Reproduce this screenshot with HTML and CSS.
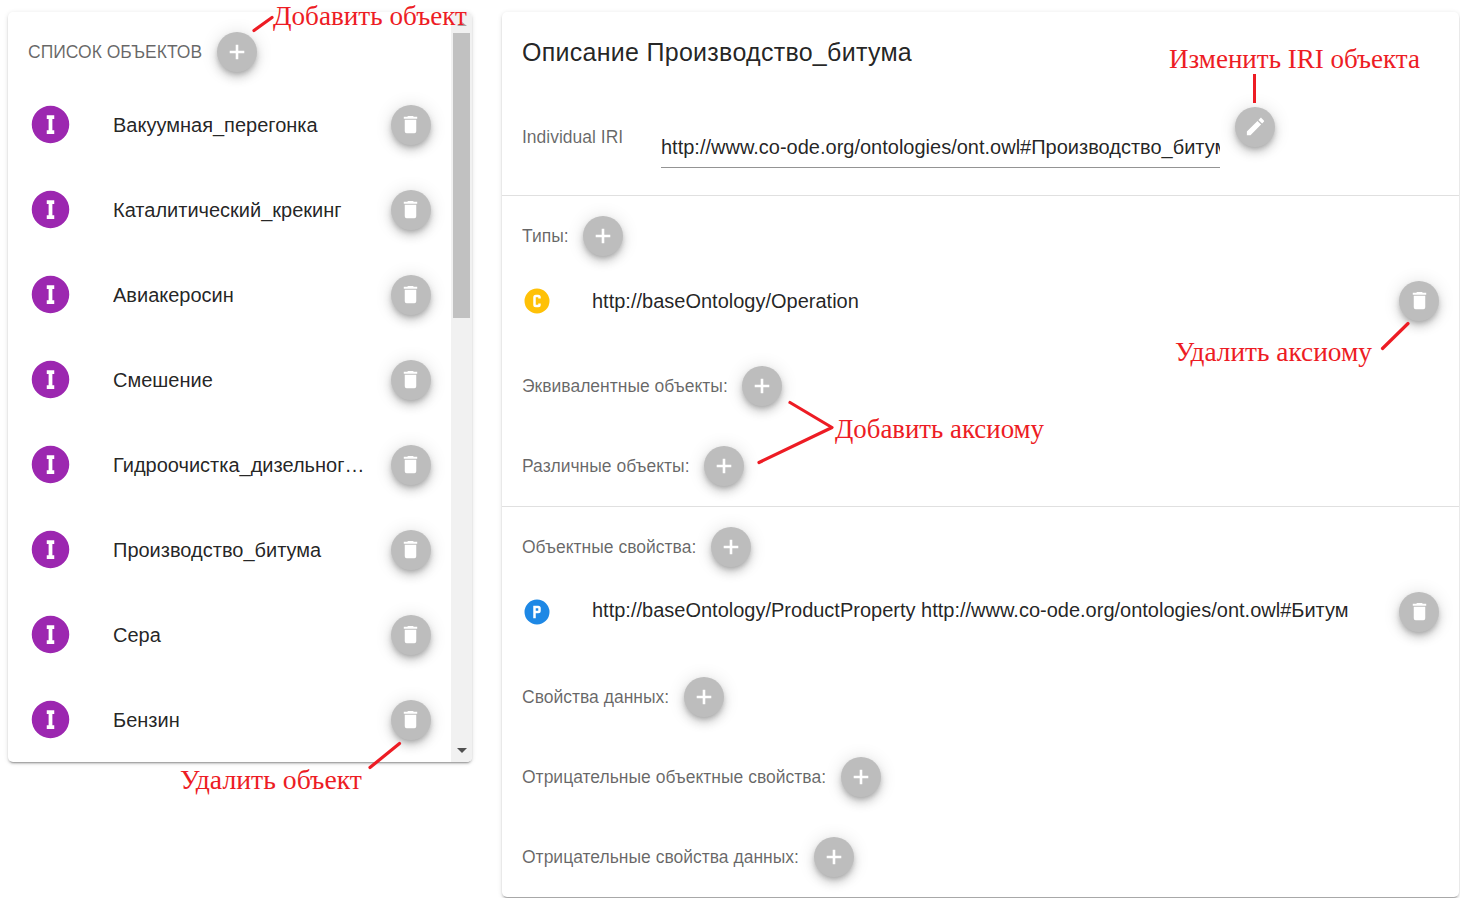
FILE: index.html
```html
<!DOCTYPE html>
<html lang="ru">
<head>
<meta charset="utf-8">
<title>Объекты</title>
<link rel="stylesheet" href="styles.css">
</head>
<body>
<svg class="defs" aria-hidden="true">
  <symbol id="plus" viewBox="0 0 24 24"><path d="M19.300,13.300H13.300V19.300H10.700V13.300H4.700V10.700H10.700V4.700H13.300V10.700H19.300V13.300Z"/></symbol>
  <symbol id="trash" viewBox="0 0 24 24"><path d="M19,4H15.5L14.5,3H9.5L8.5,4H5V6H19M6,19A2,2 0 0,0 8,21H16A2,2 0 0,0 18,19V7H6V19Z"/></symbol>
  <symbol id="pencil" viewBox="0 0 24 24"><path d="M20.71,7.04C21.1,6.65 21.1,6 20.71,5.63L18.37,3.29C18,2.9 17.35,2.9 16.96,3.29L15.12,5.12L18.87,8.87M3,17.25V21H6.75L17.81,9.93L14.06,6.18L3,17.25Z"/></symbol>
  <symbol id="ind" viewBox="0 0 24 24"><path d="M12,2A10,10 0 0,1 22,12A10,10 0 0,1 12,22A10,10 0 0,1 2,12A10,10 0 0,1 12,2M10,7V9H11V15H10V17H14V15H13V9H14V7H10Z"/></symbol>
  <symbol id="cls" viewBox="0 0 24 24"><path d="M12,2A10,10 0 0,1 22,12A10,10 0 0,1 12,22A10,10 0 0,1 2,12A10,10 0 0,1 12,2M11,7A2,2 0 0,0 9,9V15A2,2 0 0,0 11,17H13A2,2 0 0,0 15,15V14H13V15H11V9H13V10H15V9A2,2 0 0,0 13,7H11Z"/></symbol>
  <symbol id="prop" viewBox="0 0 24 24"><path fill-rule="evenodd" d="M12,2A10,10 0 0,1 22,12A10,10 0 0,1 12,22A10,10 0 0,1 2,12A10,10 0 0,1 12,2M9,7V17H11V13H13A2,2 0 0,0 15,11V9A2,2 0 0,0 13,7H9M11,9H13V11H11V9Z"/></symbol>
</svg>

<div class="page">
  <aside class="card list-card">
    <div class="list">
      <div class="list-head"><span class="label caps">СПИСОК ОБЪЕКТОВ</span><button class="fab add"><svg><use href="#plus"/></svg></button></div>
      <div class="item"><svg class="avatar"><use href="#ind"/></svg><span class="name">Вакуумная_перегонка</span><button class="fab"><svg><use href="#trash"/></svg></button></div>
      <div class="item"><svg class="avatar"><use href="#ind"/></svg><span class="name">Каталитический_крекинг</span><button class="fab"><svg><use href="#trash"/></svg></button></div>
      <div class="item"><svg class="avatar"><use href="#ind"/></svg><span class="name">Авиакеросин</span><button class="fab"><svg><use href="#trash"/></svg></button></div>
      <div class="item"><svg class="avatar"><use href="#ind"/></svg><span class="name">Смешение</span><button class="fab"><svg><use href="#trash"/></svg></button></div>
      <div class="item"><svg class="avatar"><use href="#ind"/></svg><span class="name">Гидроочистка_дизельног…</span><button class="fab"><svg><use href="#trash"/></svg></button></div>
      <div class="item"><svg class="avatar"><use href="#ind"/></svg><span class="name">Производство_битума</span><button class="fab"><svg><use href="#trash"/></svg></button></div>
      <div class="item"><svg class="avatar"><use href="#ind"/></svg><span class="name">Сера</span><button class="fab"><svg><use href="#trash"/></svg></button></div>
      <div class="item"><svg class="avatar"><use href="#ind"/></svg><span class="name">Бензин</span><button class="fab"><svg><use href="#trash"/></svg></button></div>
    </div>
    <div class="scrollbar">
      <span class="arrow up"></span>
      <span class="thumb"></span>
      <span class="arrow down"></span>
    </div>
  </aside>

  <main class="card detail">
    <section class="section">
      <h1 class="title"><span>Описание Производство_битума</span></h1>
      <div class="iri-row">
        <span class="label iri-label">Individual IRI</span>
        <div class="field"><span>http://www.co-ode.org/ontologies/ont.owl#Производство_битума</span></div>
        <button class="fab"><svg><use href="#pencil"/></svg></button>
      </div>
    </section>
    <section class="section">
      <div class="group"><span class="label">Типы:</span><button class="fab add"><svg><use href="#plus"/></svg></button></div>
      <div class="axiom"><svg class="mark amber"><use href="#cls"/></svg><span class="value">http://baseOntology/Operation</span><button class="fab"><svg><use href="#trash"/></svg></button></div>
      <div class="group"><span class="label">Эквивалентные объекты:</span><button class="fab add"><svg><use href="#plus"/></svg></button></div>
      <div class="group"><span class="label">Различные объекты:</span><button class="fab add"><svg><use href="#plus"/></svg></button></div>
    </section>
    <section class="section">
      <div class="group"><span class="label">Объектные свойства:</span><button class="fab add"><svg><use href="#plus"/></svg></button></div>
      <div class="axiom"><svg class="mark blue"><use href="#prop"/></svg><span class="value raised">http://baseOntology/ProductProperty http://www.co-ode.org/ontologies/ont.owl#Битум</span><button class="fab"><svg><use href="#trash"/></svg></button></div>
      <div class="group"><span class="label">Свойства данных:</span><button class="fab add"><svg><use href="#plus"/></svg></button></div>
      <div class="group"><span class="label">Отрицательные объектные свойства:</span><button class="fab add"><svg><use href="#plus"/></svg></button></div>
      <div class="group"><span class="label">Отрицательные свойства данных:</span><button class="fab add"><svg><use href="#plus"/></svg></button></div>
    </section>
  </main>
</div>

<svg class="notes" viewBox="0 0 1460 898">
  <text x="273" y="25.400" textLength="194" lengthAdjust="spacingAndGlyphs">Добавить объект</text>
  <text x="180" y="789.400" textLength="182" lengthAdjust="spacingAndGlyphs">Удалить объект</text>
  <text x="1169" y="68.400" textLength="251" lengthAdjust="spacingAndGlyphs">Изменить IRI объекта</text>
  <text x="1175" y="361.400" textLength="197" lengthAdjust="spacingAndGlyphs">Удалить аксиому</text>
  <text x="835" y="438.400" textLength="209" lengthAdjust="spacingAndGlyphs">Добавить аксиому</text>
  <path d="M254,30.5L272,17.5M370,767.500L399.500,743.500M1382.500,348.500L1408,323.500M790,402.500L832,427.500L759,462.500"/>
  <path class="butt" d="M1254.500,74V103"/>
</svg>
</body>
</html>
```
FILE: styles.css
```css
* { box-sizing: border-box; }
body {
  margin: 0;
  width: 1460px;
  height: 898px;
  overflow: hidden;
  background: #fff;
  color: rgba(0, 0, 0, .87);
  font-family: "Liberation Sans", Arial, sans-serif;
  font-size: 20px;
}
.defs { display: none; }
.page {
  display: flex;
  align-items: flex-start;
  gap: 30px;
  padding: 12px 1px 0 8px;
}
.card {
  background: #fff;
  border-radius: 5px;
  box-shadow: 0 3px 1px -2px rgba(0, 0, 0, .2), 0 2px 2px 0 rgba(0, 0, 0, .14), 0 1px 5px 0 rgba(0, 0, 0, .12);
}
.list-card {
  display: flex;
  width: 464px;
  height: 750px;
  overflow: hidden;
}
.list { flex: 1; min-width: 0; }
.list-head {
  display: flex;
  align-items: center;
  height: 80px;
  margin-bottom: -9px;
  padding-left: 20px;
}
.label {
  margin-right: 14.65px;
  color: rgba(0, 0, 0, .6);
  font-size: 17.5px;
  line-height: 24px;
  white-space: nowrap;
}
.fab {
  display: flex;
  flex: none;
  align-items: center;
  justify-content: center;
  width: 40px;
  height: 40px;
  padding: 0 0 2px;
  border: 0;
  border-radius: 50%;
  background: #bdbdbd;
  box-shadow: 0 3px 5px -1px rgba(0, 0, 0, .2), 0 6px 10px 0 rgba(0, 0, 0, .14), 0 1px 18px 0 rgba(0, 0, 0, .12);
}
.fab svg { width: 23px; height: 23px; fill: #fff; }
.fab.add { padding-bottom: 1px; }
.fab.add svg { width: 24px; height: 24px; }
.item {
  display: flex;
  align-items: center;
  height: 85px;
  padding: 0 20px 1px;
}
.item .fab { margin-top: -1px; padding: 0; }
.item .fab svg { margin: 0 0 1px -.5px; }
.avatar { flex: none; width: 45px; height: 45px; margin: 0 40px 1px 0; fill: #9c27b0; }
.name {
  flex: 1;
  margin: -1px 20px 0 0;
  overflow: hidden;
  line-height: 28px;
  text-overflow: ellipsis;
  white-space: nowrap;
}
.scrollbar {
  display: flex;
  flex-direction: column;
  align-items: center;
  width: 21px;
  padding: 10px 0 9px;
  background: #f1f1f1;
}
.thumb { width: 17px; height: 285px; margin: 7px 0 auto; background: #c1c1c1; }
.arrow { border: 5px solid transparent; border-top-width: 0; border-bottom: 4px solid #a3a3a3; }
.arrow.down { border-bottom: 0; border-top: 5px solid #505050; }
.detail { width: 957px; height: 885px; }
.section + .section { border-top: 1px solid #e0e0e0; }
.title {
  display: flex;
  align-items: center;
  height: 80px;
  margin: 0;
  padding-left: 20px;
  font-size: 25px;
  font-weight: 400;
  letter-spacing: .28px;
}
.iri-row {
  display: flex;
  align-items: flex-start;
  height: 103px;
  padding: 15px 20px 0;
}
.iri-label { width: 139px; margin: 18px 0 0; }
.field {
  width: 559px;
  height: 41px;
  margin: 20px 15px 0 0;
  padding-top: 6px;
  overflow: hidden;
  border-bottom: 1px solid #949494;
  line-height: 28px;
  white-space: nowrap;
}
.group { display: flex; align-items: center; height: 80px; padding-left: 20px; }
.axiom { display: flex; align-items: flex-start; height: 70px; padding: 5px 20px; }
.mark { width: 30px; height: 30px; margin: 4.6px 40px 0 0; }
.amber { fill: #ffc107; }
.blue { fill: #1e88e5; }
.value { flex: 1; margin-top: 6px; line-height: 28px; white-space: nowrap; }
.value.raised { margin-top: 4px; }
.notes { position: absolute; inset: 0; width: 1460px; height: 898px; pointer-events: none; }
.notes text { fill: #ed1c24; font-family: "Liberation Serif", "Times New Roman", serif; font-size: 26.3px; }
.notes path { fill: none; stroke: #ed1c24; stroke-width: 3.2; stroke-linecap: round; stroke-linejoin: round; }
.notes .butt { stroke-width: 3; stroke-linecap: butt; }
```
